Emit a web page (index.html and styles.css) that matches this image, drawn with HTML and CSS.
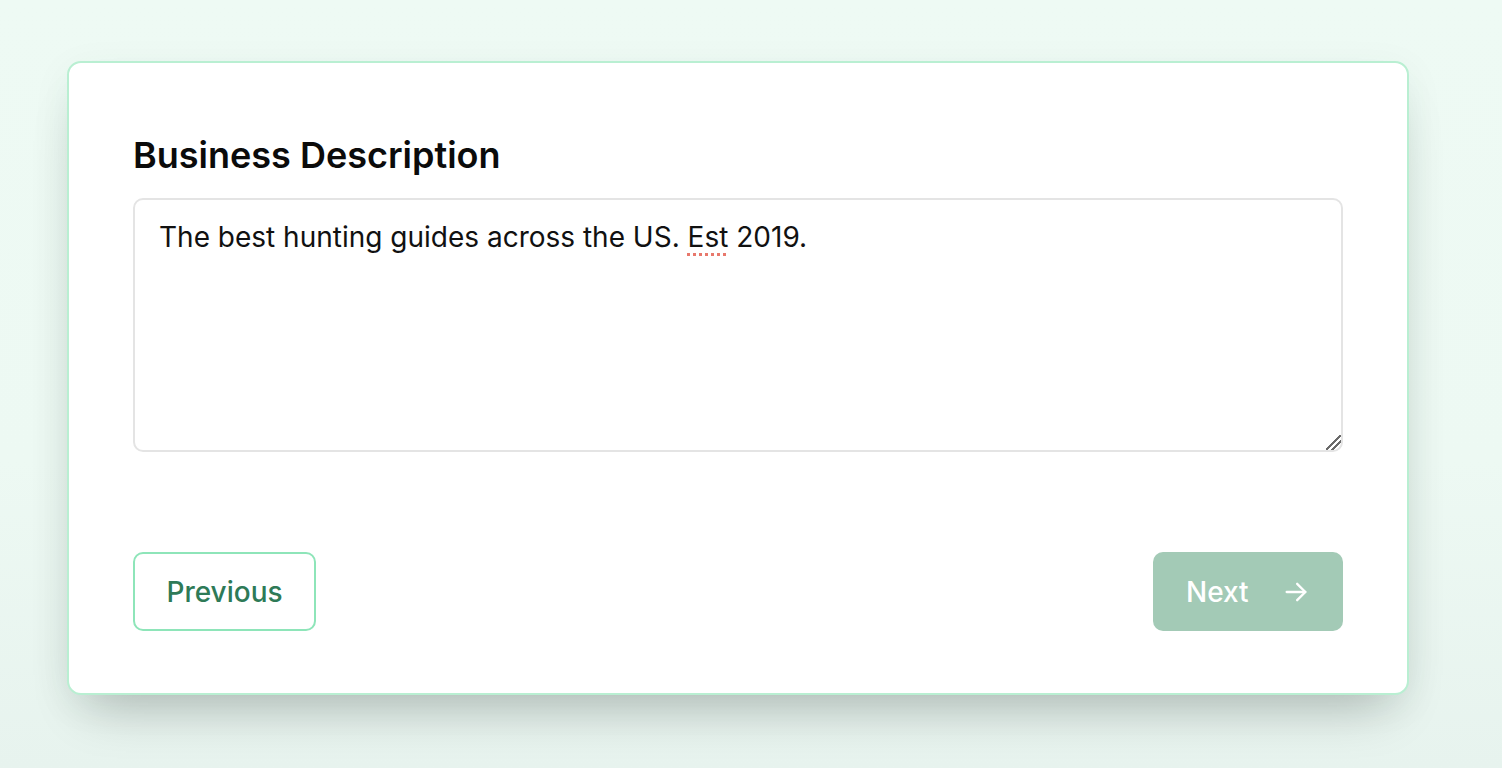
FILE: index.html
```html
<!DOCTYPE html>
<html lang="en">
<head>
<meta charset="utf-8">
<title>Business Description</title>
<link rel="stylesheet" href="styles.css">
</head>
<body>
<main class="page">
  <section class="card">
    <h2 class="title">Business Description</h2>
    <div class="field" role="textbox" aria-multiline="true">The best hunting guides across the US. <span class="misspelled">Est</span> 2019.</div>
    <div class="actions">
      <button class="btn btn-outline" type="button">Previous</button>
      <button class="btn btn-primary" type="button">
        <span>Next</span>
        <svg class="arrow" viewBox="0 0 24 24" fill="none" stroke="currentColor" stroke-width="2" stroke-linecap="round" stroke-linejoin="round"><path d="M4 12h16"/><path d="M13 5l7 7-7 7"/></svg>
      </button>
    </div>
  </section>
</main>
</body>
</html>
```

FILE: styles.css
```css
* { box-sizing: border-box; }
html, body { margin: 0; height: 100%; }
body {
  font-family: Inter, "Noto Sans", sans-serif;
  background: linear-gradient(180deg, #eefaf4 0%, #edf9f3 60%, #e7f3ee 100%);
  overflow: hidden;
}
.page {
  padding: 61px 0 0 67px;
}
.card {
  width: 1342px;
  height: 634px;
  background: #fff;
  border: 2px solid #b9efd2;
  border-radius: 14px;
  box-shadow: 0 30px 50px -20px rgba(0, 0, 0, 0.24), 0 10px 40px rgba(40, 90, 70, 0.06);
  padding: 68px 64px 62px 64px;
  display: flex;
  flex-direction: column;
}
.title {
  margin: 0 0 19px 0;
  font-size: 36px;
  font-weight: 600;
  line-height: 48px;
  color: #0b0b0b;
}
.field {
  height: 254px;
  border: 2px solid #e4e4e4;
  border-radius: 10px;
  padding: 18px 24px;
  font-size: 28px;
  line-height: 38px;
  color: #111;
  resize: vertical;
  overflow: auto;
}
.field::-webkit-resizer {
  background:
    linear-gradient(135deg, transparent 0 44%, #6a6a6a 44% 54%, transparent 54% 66%, #6a6a6a 66% 76%, transparent 76%);
}
.misspelled {
  text-decoration: underline dotted #e8786c;
  text-decoration-thickness: 3px;
  text-underline-offset: 6px;
}
.actions {
  margin-top: auto;
  display: flex;
  justify-content: space-between;
  align-items: center;
}
.btn {
  font-family: inherit;
  font-size: 28px;
  font-weight: 500;
  height: 79px;
  border-radius: 10px;
  display: inline-flex;
  align-items: center;
  cursor: pointer;
}
.btn-outline {
  width: 183px;
  justify-content: center;
  background: #fff;
  border: 2px solid #8ee5b9;
  color: #2e7a57;
}
.btn-primary {
  width: 190px;
  padding: 0 33px 0 33px;
  justify-content: space-between;
  background: #a3cab6;
  border: none;
  color: #fff;
}
.arrow { width: 28px; height: 28px; }
```
